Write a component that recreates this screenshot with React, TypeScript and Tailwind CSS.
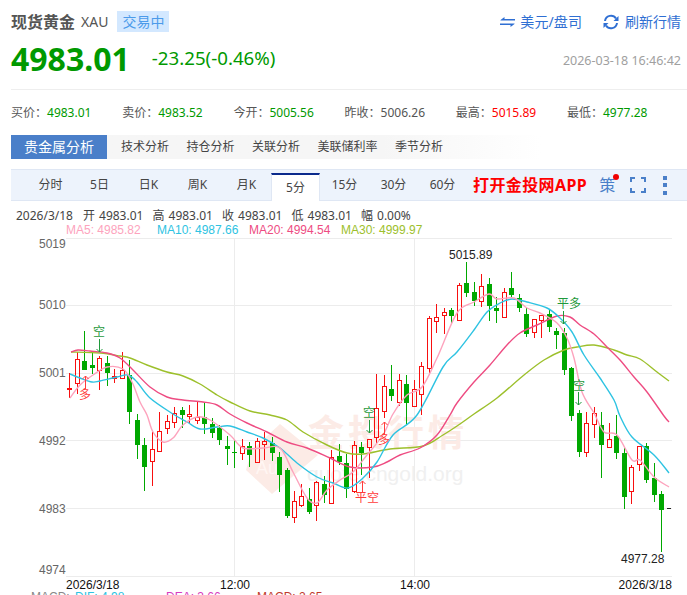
const X0 = 69.3;
const STEP = 7.49;

// bodyTop, bodyBottom, wickTop, wickBottom, colour
type Candle = [number, number, number, number, "r" | "g"];

const candles: Candle[] = [
  [388, 389, 373, 398, "r"], [359, 383, 352, 394, "r"], [361, 370, 331, 370, "g"], [365, 368, 352, 374, "g"],
  [358, 370, 356, 390, "r"], [363, 373, 356, 386, "g"], [376, 378, 369, 383, "r"], [370, 378, 352, 378, "r"],
  [375, 412, 360, 424, "g"], [420, 445, 414, 459, "g"], [445, 467, 438, 491, "g"], [449, 461, 432, 486, "r"],
  [431, 451, 412, 452, "r"], [421, 428, 415, 434, "r"], [413, 422, 407, 428, "r"], [410, 415, 407, 428, "g"],
  [414, 416, 405, 424, "r"], [417, 420, 402, 424, "r"], [417, 424, 402, 434, "g"], [424, 433, 418, 438, "g"],
  [428, 440, 425, 445, "g"], [446, 449, 436, 465, "g"], [452, 453, 440, 468, "g"], [446, 453, 439, 460, "r"],
  [446, 455, 442, 467, "g"], [441, 462, 438, 462, "r"], [441, 444, 432, 460, "r"], [443, 453, 437, 461, "g"],
  [457, 475, 452, 492, "g"], [470, 516, 468, 518, "g"], [501, 517, 491, 523, "r"], [496, 505, 484, 507, "r"],
  [499, 512, 488, 514, "g"], [482, 505, 481, 521, "r"], [484, 495, 476, 503, "g"], [457, 503, 450, 504, "r"],
  [456, 462, 444, 465, "g"], [463, 489, 454, 498, "g"], [445, 491, 441, 493, "r"], [447, 453, 442, 475, "g"],
  [439, 447, 439, 478, "r"], [408, 437, 374, 443, "r"], [386, 411, 375, 418, "r"], [389, 396, 365, 401, "g"],
  [380, 402, 374, 406, "r"], [384, 403, 375, 425, "g"], [389, 406, 380, 406, "r"], [366, 394, 362, 415, "r"],
  [318, 368, 316, 373, "r"], [317, 321, 304, 333, "r"], [312, 315, 308, 334, "r"], [310, 316, 308, 324, "g"],
  [285, 320, 283, 321, "r"], [283, 293, 262, 297, "g"], [292, 301, 282, 306, "g"], [286, 301, 274, 307, "r"],
  [284, 306, 278, 321, "g"], [308, 311, 297, 323, "g"], [292, 317, 288, 317, "r"], [288, 295, 272, 297, "g"],
  [298, 308, 294, 312, "g"], [314, 334, 308, 337, "g"], [319, 332, 319, 338, "r"], [315, 320, 315, 338, "r"],
  [314, 327, 310, 332, "g"], [331, 335, 328, 349, "g"], [333, 370, 328, 375, "g"], [368, 416, 367, 421, "g"],
  [413, 452, 410, 457, "g"], [423, 452, 412, 457, "r"], [413, 424, 407, 438, "r"], [425, 445, 412, 478, "g"],
  [439, 447, 423, 447, "r"], [436, 453, 415, 459, "g"], [453, 497, 448, 509, "g"], [467, 491, 465, 504, "r"],
  [446, 464, 446, 471, "r"], [446, 480, 443, 483, "g"], [478, 495, 463, 502, "g"], [494, 510, 491, 552, "g"],
];

const ma30 = [[71, 352], [100, 353], [120, 356], [130, 358], [147, 365], [167, 372], [183, 376], [200, 384], [217, 395], [230, 402], [250, 411], [270, 415], [287, 420], [303, 432], [327, 445], [347, 453], [363, 454], [390, 449], [423, 446], [443, 435], [460, 424], [474, 414], [497, 398], [524, 375], [544, 360], [564, 350], [577, 347], [594, 345], [614, 350], [627, 355], [640, 359], [657, 372], [669, 381]];
const ma20 = [[71, 352], [78, 350], [90, 351], [107, 353], [120, 358], [133, 370], [150, 387], [167, 397], [183, 400], [203, 402], [217, 405], [230, 414], [247, 423], [267, 432], [287, 442], [307, 448], [330, 458], [350, 467], [373, 467], [387, 462], [400, 455], [420, 448], [437, 435], [450, 415], [457, 403], [474, 382], [490, 365], [507, 345], [520, 333], [537, 325], [557, 316], [570, 317], [580, 325], [594, 334], [607, 347], [620, 360], [634, 377], [647, 392], [664, 416], [669, 422]];
const ma10 = [[70, 374], [80, 378], [92, 382], [100, 381], [117, 377], [128, 375], [137, 382], [150, 398], [173, 414], [187, 422], [200, 429], [217, 427], [230, 426], [247, 432], [263, 438], [280, 448], [297, 463], [317, 477], [333, 483], [348, 488], [363, 478], [377, 462], [393, 435], [417, 415], [443, 367], [457, 352], [474, 330], [487, 312], [500, 303], [512, 299], [527, 302], [547, 308], [560, 318], [572, 332], [584, 355], [600, 378], [614, 400], [620, 416], [632, 437], [654, 455], [669, 473]];
const ma5 = [[70, 398], [80, 385], [93, 375], [107, 367], [123, 369], [132, 382], [140, 402], [147, 415], [153, 432], [163, 442], [173, 438], [183, 425], [197, 417], [210, 420], [230, 435], [243, 448], [263, 448], [280, 448], [293, 472], [307, 498], [317, 503], [327, 490], [340, 480], [353, 472], [367, 455], [383, 435], [393, 414], [407, 395], [422, 387], [437, 358], [457, 313], [474, 302], [489, 294], [497, 299], [514, 298], [527, 308], [540, 313], [557, 323], [567, 338], [574, 358], [582, 392], [594, 413], [604, 432], [617, 435], [632, 460], [640, 460], [654, 477], [669, 487]];

// round the moving averages off a little, they are not straight segments in the picture
function smooth(pts: number[][]) {
  let d = `M${pts[0][0]} ${pts[0][1]}`;
  for (let i = 0; i < pts.length - 1; i++) {
    const a = pts[Math.max(i - 1, 0)];
    const b = pts[i];
    const c = pts[i + 1];
    const e = pts[Math.min(i + 2, pts.length - 1)];
    d += `C${b[0] + (c[0] - a[0]) / 6} ${b[1] + (c[1] - a[1]) / 6} ${c[0] - (e[0] - b[0]) / 6} ${c[1] - (e[1] - b[1]) / 6} ${c[0]} ${c[1]}`;
  }
  return d;
}

const stats = [
  { label: "买价", value: "4983.01", color: "text-[#009900]" },
  { label: "卖价", value: "4983.52", color: "text-[#009900]" },
  { label: "今开", value: "5005.56", color: "text-[#009900]" },
  { label: "昨收", value: "5006.26", color: "text-[#555555]" },
  { label: "最高", value: "5015.89", color: "text-[#ff0000]" },
  { label: "最低", value: "4977.28", color: "text-[#009900]" },
];

const periods = ["分时", "5日", "日K", "周K", "月K", "5分", "15分", "30分", "60分"];
const analysis = ["技术分析", "持仓分析", "关联分析", "美联储利率", "季节分析"];
const ohlc = [["开", "4983.01"], ["高", "4983.01"], ["收", "4983.01"], ["低", "4983.01"], ["幅", "0.00%"]];

const gridY = [238.5, 305.5, 373.5, 440.5, 508.5, 576.5];
const axis = [["5019", 248], ["5010", 309], ["5001", 377], ["4992", 445], ["4983", 513], ["4974", 574]] as const;
const markers = [
  { text: "空", x: 99, y: 336, c: "#1f9a3c" }, { text: "多", x: 85, y: 399, c: "#ff3b3b" },
  { text: "平多", x: 569, y: 308, c: "#1f9a3c" }, { text: "空", x: 579, y: 390, c: "#1f9a3c" },
  { text: "空", x: 369, y: 417, c: "#1f9a3c" }, { text: "多", x: 384, y: 444, c: "#ff3b3b" },
  { text: "平空", x: 367, y: 502, c: "#ff3b3b" },
];
const arrows = [
  { x: 99.5, from: 339, to: 352, c: "#1f9a3c" }, { x: 85.5, from: 389, to: 376, c: "#ff3b3b" },
  { x: 563.5, from: 311, to: 324, c: "#1f9a3c" }, { x: 578.5, from: 392, to: 405, c: "#1f9a3c" },
  { x: 369.5, from: 420, to: 433, c: "#1f9a3c" }, { x: 384.5, from: 435, to: 422, c: "#ff3b3b" },
  { x: 362.5, from: 493, to: 481, c: "#ff3b3b" },
];

function KChart() {
  return (
    <svg viewBox="0 236 687 354" width={687} height={354} className="block overflow-visible [font-family:'Liberation_Sans','Noto_Sans_CJK_SC',sans-serif]">
      {gridY.map((y) => (
        <line key={y} x1={66} x2={672} y1={y} y2={y} stroke="#ececec" />
      ))}
      <line x1={234.5} x2={234.5} y1={238} y2={576} stroke="#ececec" />
      <line x1={414.5} x2={414.5} y1={238} y2={576} stroke="#ececec" />

      {/* watermark */}
      <path d="M280 424 L318 455 L272 494 L246 470 L252 450Z" fill="#fcebe6" />
      <text x={256} y={474} fontSize={18} fill="#fff6f3">Au</text>
      <text x={308} y={446} fontSize={36} fontWeight={700} letterSpacing={4} fill="#fcebe6">金投行情</text>
      <text x={307} y={481} fontSize={21} fill="#f0f0f0">quote.cngold.org</text>

      {axis.map(([t, y]) => (
        <text key={t} x={39} y={y} fontSize={12} fill="#666666">{t}</text>
      ))}

      {candles.map(([top, bottom, wt, wb, c], i) => {
        const x = Math.round(X0 + STEP * i) + 0.5;
        if (c === "g") {
          return (
            <g key={i}>
              <line x1={x} x2={x} y1={wt} y2={wb} stroke="#00a800" />
              <rect x={x - 2.5} y={top} width={5} height={bottom - top} fill="#00a800" />
            </g>
          );
        }
        return (
          <g key={i} stroke="#f80f0f" fill="none">
            <line x1={x} x2={x} y1={wt} y2={top} />
            <line x1={x} x2={x} y1={bottom} y2={wb} />
            <rect x={x - 2} y={top + 0.5} width={4} height={bottom - top} />
          </g>
        );
      })}

      <path d={smooth(ma30)} fill="none" stroke="#9dc02c" strokeWidth={1.4} />
      <path d={smooth(ma20)} fill="none" stroke="#ee4c82" strokeWidth={1.4} />
      <path d={smooth(ma10)} fill="none" stroke="#2ec3e2" strokeWidth={1.4} />
      <path d={smooth(ma5)} fill="none" stroke="#fda3bd" strokeWidth={1.4} />

      {arrows.map((a, i) => {
        const dir = a.to > a.from ? -1 : 1;
        return (
          <path
            key={i}
            d={`M${a.x} ${a.from}V${a.to}M${a.x - 3} ${a.to + dir * 3}L${a.x} ${a.to}L${a.x + 3} ${a.to + dir * 3}`}
            fill="none"
            stroke={a.c}
          />
        );
      })}
      {markers.map((m, i) => (
        <text key={i} x={m.x} y={m.y} fontSize={12} textAnchor="middle" fill={m.c}>{m.text}</text>
      ))}

      <text x={449} y={259} fontSize={12} fill="#222222">5015.89</text>
      <text x={621} y={563} fontSize={12} fill="#222222">4977.28</text>
      <line x1={667} x2={671} y1={508.5} y2={508.5} stroke="#222222" />

      <text x={66} y={589} fontSize={12} fill="#111111">2026/3/18</text>
      <text x={235} y={589} fontSize={12} textAnchor="middle" fill="#111111">12:00</text>
      <text x={415} y={589} fontSize={12} textAnchor="middle" fill="#111111">14:00</text>
      <text x={672} y={589} fontSize={12} textAnchor="end" fill="#111111">2026/3/18</text>
    </svg>
  );
}

export default function App() {
  return (
    <div className="h-[595px] w-[687px] overflow-hidden bg-white [font-family:'Noto_Sans','Noto_Sans_CJK_SC',sans-serif]">
      <div className="flex h-[32px] items-end justify-between pl-[11px] pr-[6px]">
        <div className="flex h-[21px] items-center">
          <span className="text-base leading-none font-bold text-[#555555]">现货黄金</span>
          <span className="ml-[6px] text-sm leading-none text-[#555555]">XAU</span>
          <span className="ml-[9px] flex h-[21px] w-[52px] items-center justify-center bg-[#d3e8ff] text-sm text-[#4c9bea]">交易中</span>
        </div>
        <div className="flex h-[21px] items-center text-sm text-[#2f6fd3]">
          <svg width="15" height="10" viewBox="0 0 15 10" className="mr-[5px]" fill="#2f6fd3">
            <path d="M4.5 0v2H15v1.6H0.5V3L4.5 0Z" />
            <path d="M10.5 10V8H0V6.4H14.5V7L10.5 10Z" />
          </svg>
          <span className="tracking-[0.1px]">美元/盘司</span>
          <svg width="16" height="16" viewBox="0 0 16 16" className="mr-[6px] ml-[21px]" fill="none" stroke="#2f6fd3" strokeWidth="2">
            <path d="M2 7A6 6 0 0 1 13 4.5" />
            <path d="M14 9A6 6 0 0 1 3 11.500" />
            <path d="M15.500 2V7H10.500Z" fill="#2f6fd3" stroke="none" />
            <path d="M0.500 14V9H5.500Z" fill="#2f6fd3" stroke="none" />
          </svg>
          <span>刷新行情</span>
        </div>
      </div>

      <div className="flex h-[57px] items-center justify-between pb-[4px] pl-[11px] pr-[6px]">
        <div className="flex items-center">
          <span className="text-[32px] leading-none font-bold text-[#009900]">4983.01</span>
          <span className="ml-[22px] text-[18.7px] leading-none text-[#009900]">-23.25(-0.46%)</span>
        </div>
        <span className="mt-[5px] text-[12.5px] leading-none text-[#a0a0a0]">2026-03-18 16:46:42</span>
      </div>

      <div className="ml-[11px] border-t border-[#eeeeee]" />

      <div className="grid h-[45px] grid-cols-[repeat(6,111.2px)] items-center pl-[11px] text-xs text-[#555555]">
        {stats.map((s) => (
          <div key={s.label}>
            {s.label}：<span className={s.color}>{s.value}</span>
          </div>
        ))}
      </div>

      <div className="ml-[11px] flex h-[24px] w-[530px] items-center bg-gradient-to-r from-[#f6f6f6] from-70% to-white text-xs text-[#444444]">
        <div className="flex h-full w-[96px] items-center justify-center bg-[#4a7fc9] text-sm text-white">贵金属分析</div>
        <div className="ml-[14px] flex gap-[17.5px]">
          {analysis.map((t) => (
            <span key={t}>{t}</span>
          ))}
        </div>
      </div>

      <div className="mt-[10px] ml-[11px] flex h-[32px] items-stretch border-y border-[#dfe7f4] bg-[#edf3fc] pl-[15px] text-xs text-[#444444]">
        {periods.map((p) =>
          p === "5分" ? (
            <div key={p} className="mt-[3px] -mb-px flex w-[49px] items-center justify-center border-x border-t-2 border-x-[#dfe7f4] border-t-[#0b2a8c] bg-white">{p}</div>
          ) : (
            <div key={p} className="flex w-[49px] items-center justify-center">{p}</div>
          ),
        )}
        <span className="ml-[6px] self-center text-base font-bold tracking-[0.4px] text-[#ff0000]">打开金投网APP</span>
        <div className="relative ml-[12px] self-center text-base leading-none text-[#4a7fc9]">
          策
          <span className="absolute -top-[3px] -right-[4px] h-[6px] w-[6px] rounded-full bg-[#f00000]" />
        </div>
        <svg width="16" height="16" viewBox="0 0 16 16" className="ml-[15px] self-center" fill="none" stroke="#4a7fc9" strokeWidth="2">
          <path d="M1 5V1H5M11 1H15V5M15 11V15H11M5 15H1V11" />
        </svg>
        <div className="ml-[17px] flex flex-col gap-[3.500px] self-center">
          <span className="h-[4px] w-[4px] bg-[#4a7fc9]" />
          <span className="h-[4px] w-[4px] bg-[#4a7fc9]" />
          <span className="h-[4px] w-[4px] bg-[#4a7fc9]" />
        </div>
      </div>

      <div className="mt-[8px] flex h-[14px] items-center pl-[16px] text-xs leading-none text-[#444444]">
        <span className="w-[67px]">2026/3/18</span>
        {ohlc.map(([k, v]) => (
          <span key={k} className="flex w-[69.5px] gap-[4px]">
            <span>{k}</span>
            <span>{v}</span>
          </span>
        ))}
      </div>
      <div className="flex h-[13px] items-center pl-[66px] text-xs leading-none [font-family:'Liberation_Sans',sans-serif]">
        <span className="w-[91px] text-[#fda3bd]">MA5: 4985.82</span>
        <span className="w-[92px] text-[#2ec3e2]">MA10: 4987.66</span>
        <span className="w-[92px] text-[#ee4c82]">MA20: 4994.54</span>
        <span className="text-[#9dc02c]">MA30: 4999.97</span>
      </div>

      <KChart />

      <div className="flex h-[14px] items-center pl-[31px] text-xs leading-none [font-family:'Liberation_Sans',sans-serif]">
        <span className="w-[44px] text-[#888888]">MACD:</span>
        <span className="w-[91px] text-[#2ec3e2]">DIF: 4.98</span>
        <span className="w-[91px] text-[#d63cc0]">DEA: 3.66</span>
        <span className="text-[#c0392b]">MACD: 2.65</span>
      </div>
    </div>
  );
}
